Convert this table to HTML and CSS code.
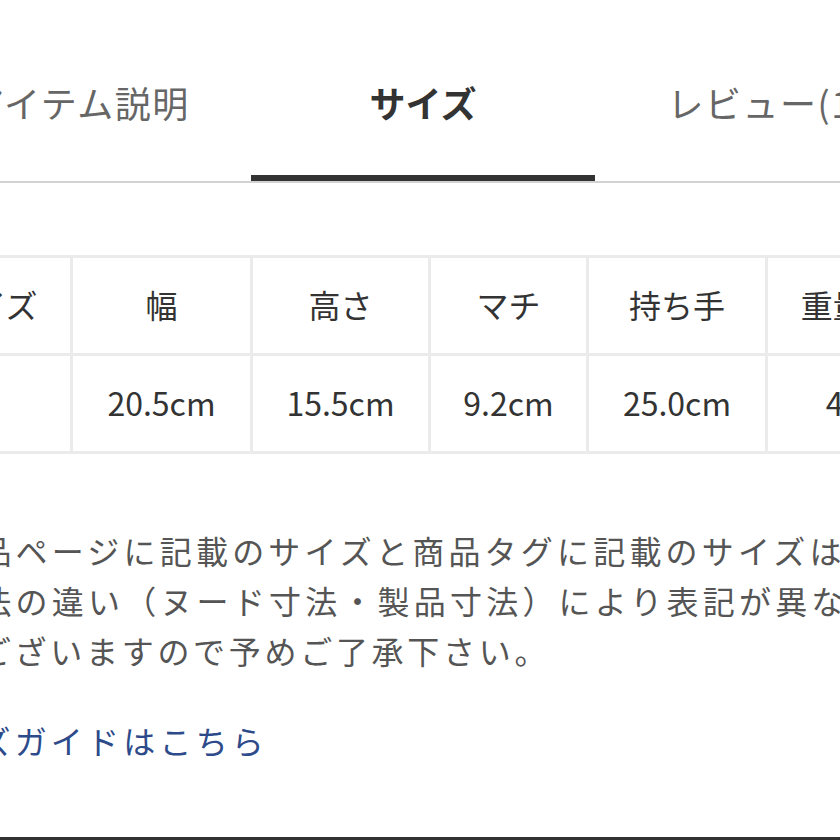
FILE: index.html
```html
<!DOCTYPE html>
<html lang="ja">
<head>
<meta charset="utf-8">
<link rel="stylesheet" href="styles.css">
</head>
<body>
<div class="page">
  <nav class="tabs">
    <div class="tab">アイテム説明</div>
    <div class="tab active">サイズ</div>
    <div class="tab">レビュー(1)</div>
  </nav>
  <section class="size">
    <table class="size-table">
      <colgroup>
        <col class="c1"><col class="c2"><col class="c3"><col class="c4"><col class="c5"><col class="c6">
      </colgroup>
      <tr class="head">
        <td>サイズ</td><td>幅</td><td>高さ</td><td>マチ</td><td>持ち手</td><td>重量(g)</td>
      </tr>
      <tr>
        <td>F</td><td>20.5cm</td><td>15.5cm</td><td>9.2cm</td><td>25.0cm</td><td>410</td>
      </tr>
    </table>
    <p class="note">
      <span class="line">※商品ページに記載のサイズと商品タグに記載のサイズは、</span>
      <span class="line">寸法の違い（ヌード寸法・製品寸法）により表記が異なる場合</span>
      <span class="line last">がございますので予めご了承下さい。</span>
    </p>
    <a class="guide" href="#">サイズガイドはこちら</a>
  </section>
  <div class="bottom-bar"></div>
</div>
</body>
</html>
```
FILE: styles.css
```css
html, body {
  margin: 0;
  padding: 0;
  background: #ffffff;
  overflow: hidden;
}
body {
  font-family: "Noto Sans CJK JP", "Noto Sans", sans-serif;
  color: #333333;
}
.page {
  width: 1032px;
  margin-left: -93px;
}
.tabs {
  display: grid;
  grid-template-columns: repeat(3, 344px);
  height: 183px;
  box-sizing: border-box;
  border-bottom: 2px solid #d2d2d2;
}
.tab {
  display: flex;
  align-items: center;
  justify-content: center;
  box-sizing: border-box;
  padding-top: 22px;
  font-size: 36px;
  color: #666666;
  white-space: nowrap;
  letter-spacing: 1.5px;
}
.tab.active {
  color: #333333;
  font-weight: 700;
  border-bottom: 6px solid #333333;
  padding-top: 28px;
  letter-spacing: 0;
}
.size {
  padding-top: 72px;
}
.size-table {
  border-collapse: collapse;
  table-layout: fixed;
  width: 1030px;
}
.c1 { width: 163px; }
.c2 { width: 180px; }
.c3 { width: 178px; }
.c4 { width: 158px; }
.c5 { width: 179px; }
.c6 { width: 172px; }
.size-table td {
  border: 3px solid #ebebeb;
  height: 91px;
  text-align: center;
  vertical-align: middle;
  font-size: 32px;
  color: #333333;
  padding: 0 0 4px 0;
  white-space: nowrap;
}
.note {
  margin: 71px 0 0 0;
  font-size: 32px;
  line-height: 50px;
  letter-spacing: 4.2px;
  color: #555555;
}
.line {
  display: block;
  white-space: nowrap;
  padding-left: 36.2px;
}
.line:first-child {
  padding-left: 0;
}
.line.last {
  letter-spacing: 3.7px;
}
.guide {
  display: block;
  margin-top: 40px;
  font-size: 32px;
  line-height: 50px;
  letter-spacing: 4.2px;
  color: #2d4b8a;
  text-decoration: none;
  white-space: nowrap;
}
.bottom-bar {
  margin-top: 72px;
  height: 4px;
  background: #333333;
}
```
